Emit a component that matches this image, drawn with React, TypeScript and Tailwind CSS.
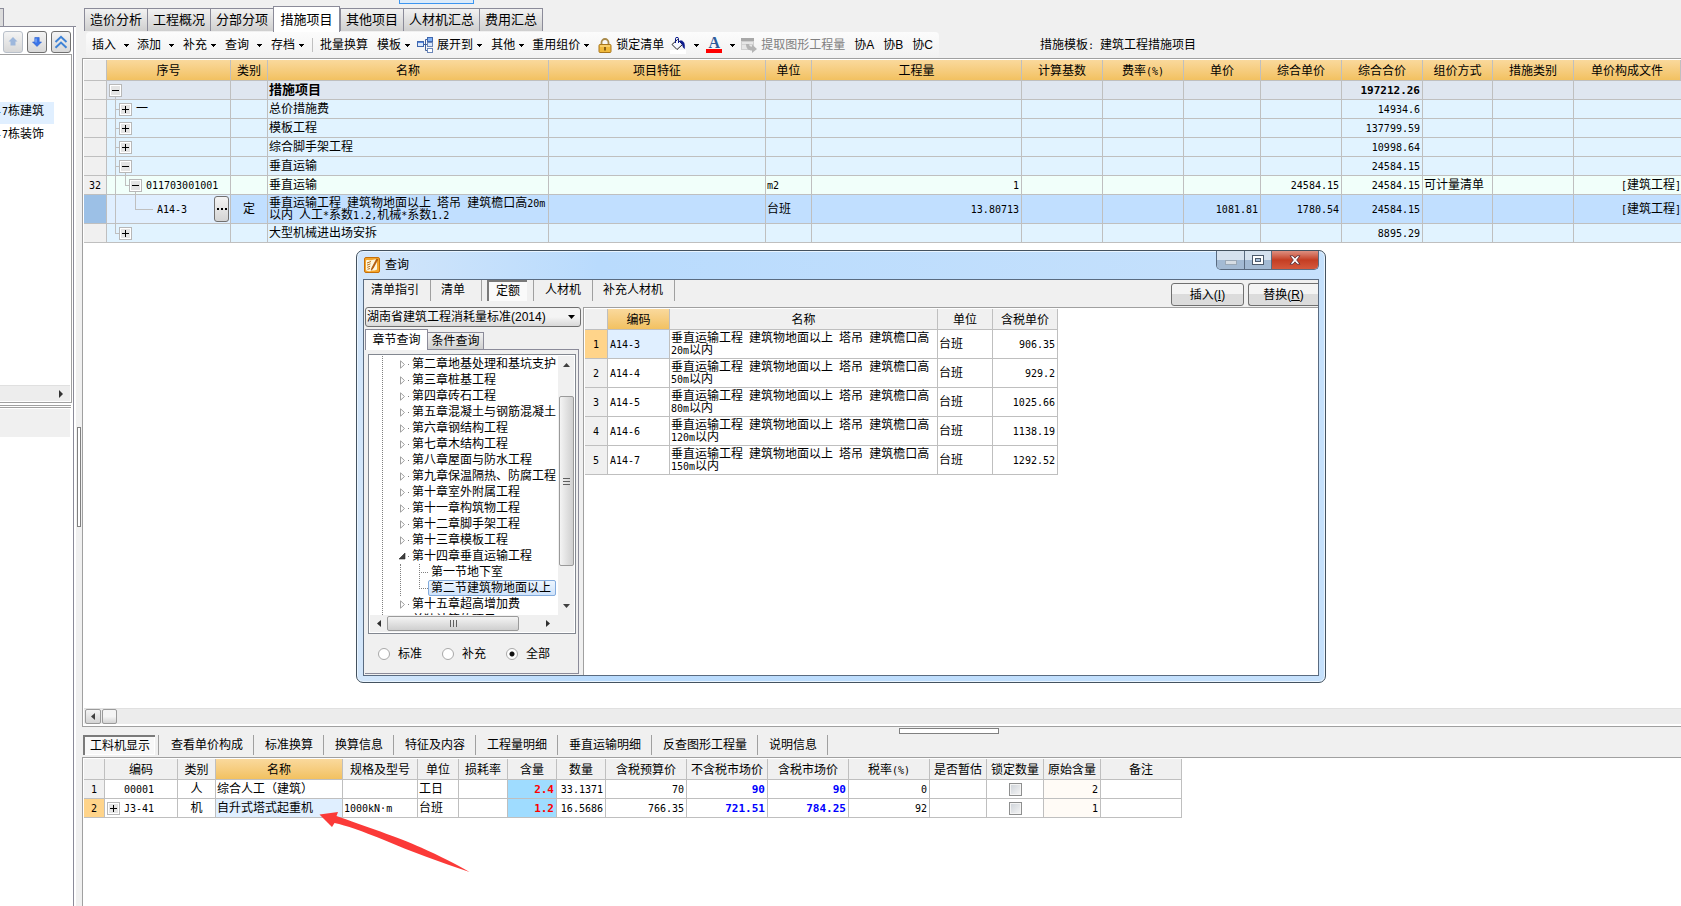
import { useState } from 'react';
import type { ReactNode } from 'react';
import { clsx } from 'clsx';

// Latin runs use a half-width monospace face next to the full-width Chinese text
function T({ children }: { children: string }) {
  const parts = children.split(/([\x20-\x7e·]+)/);
  return (
    <>
      {parts.map((part, i) =>
        i % 2 === 1 ? (
          <span key={i} className="whitespace-pre font-['DejaVu_Sans_Mono',monospace] text-[10px] leading-[0]">
            {part}
          </span>
        ) : (
          part
        )
      )}
    </>
  );
}

function Num({ children, className }: { children: string; className?: string }) {
  return (
    <span className={clsx("font-['DejaVu_Sans_Mono',monospace] leading-none", className ?? 'text-[10px]')}>
      {children}
    </span>
  );
}

function Expander({ open, label }: { open: boolean; label: string }) {
  return (
    <button type="button" aria-label={label} className="relative block h-[13px] w-[13px] shrink-0 border border-[#b8b8b8] bg-white p-px">
      <svg viewBox="0 0 9 9" className="block h-[9px] w-[9px] bg-[#e4e4e4]" shapeRendering="crispEdges">
        <path d={open ? 'M1 4h7v1h-7z' : 'M1 4h7v1h-7z M4 1h1v7h-1z'} fill="#000" />
      </svg>
    </button>
  );
}

/* ---------- left side ---------- */

function ArrowUpIcon() {
  return (
    <svg width="12" height="12" viewBox="0 0 12 12">
      <path d="M6 1 10.500 5.500H8.500v4h-5v-4H1.500z" fill="#9db7dc" />
    </svg>
  );
}

function ArrowDownIcon() {
  return (
    <svg width="12" height="12" viewBox="0 0 12 12">
      <path d="M6 10.500 1.500 6h2.300V1.500h4.400V6h2.300z" fill="#3a74e8" stroke="#2a5fd0" strokeWidth="0.6" />
      <path d="M5 2.500v4" stroke="#9cc0ff" />
    </svg>
  );
}

function DoubleUpIcon() {
  return (
    <svg width="14" height="14" viewBox="0 0 14 14" fill="none" stroke="#3f83d6" strokeWidth="2">
      <path d="M1.5 7 7 1.8 12.5 7" />
      <path d="M1.5 12.8 7 7.6l5.5 5.2" />
    </svg>
  );
}

function SidePanel() {
  const buttons = [
    { label: '上移', icon: <ArrowUpIcon />, cls: 'border-[#b9c0ca]' },
    { label: '下移', icon: <ArrowDownIcon />, cls: 'border-[#707070]' },
    { label: '收起', icon: <DoubleUpIcon />, cls: 'border-[#707070]' },
  ];
  return (
    <aside className="flex w-[76px] shrink-0 flex-col bg-[#f0f0f0]">
      <div className="flex h-[26px] items-end">
        <div className="h-[18px] w-1 border-t border-r border-[#8b8b99] bg-[#dcdcdc]" />
      </div>
      <div className="flex flex-1 flex-col border-t border-[#8b8b99] bg-white">
        <div className="flex w-[74px] flex-1 flex-col border-r border-[#8b8b99]">
          <div className="flex h-[27px] items-center gap-1 pt-[3px] pl-[3px]">
            {buttons.map((b) => (
              <button
                key={b.label}
                type="button"
                aria-label={b.label}
                className={clsx('flex h-[22px] w-5 items-center justify-center rounded-[3px] border bg-linear-to-b from-[#f4f4f4] to-[#d8d8d8]', b.cls)}
              >
                {b.icon}
              </button>
            ))}
          </div>
          <div className="flex h-[349px] w-[72px] flex-col border-t border-r border-b border-[#a0a0a0]">
            <ul className="flex-1 pt-[47px]">
              <li className="h-[22px] w-[54px] bg-[#e0efff] leading-[18px]">
                <span className="-ml-1">
                  <T>-7栋建筑</T>
                </span>
              </li>
              <li className="h-[22px] leading-[20px]">
                <span className="-ml-1">
                  <T>-7栋装饰</T>
                </span>
              </li>
            </ul>
            <div className="mb-px flex h-4 w-[70px] items-center justify-end border-t border-[#e0e0e0] bg-[#ededed] pr-[7px]">
              <svg width="4" height="8" viewBox="0 0 4 8">
                <path d="M0 0l4 4-4 4z" fill="#333" />
              </svg>
            </div>
          </div>
          <div className="mt-[2px] h-[3px] w-[71px] border-t border-b border-[#a0a0a0]" />
          <div className="mt-px h-[28px] w-[70px] bg-[#f0f0f0]" />
        </div>
      </div>
    </aside>
  );
}

/* ---------- top bar ---------- */

const mainTabs = ['造价分析', '工程概况', '分部分项', '措施项目', '其他项目', '人材机汇总', '费用汇总'];

function MainTabs() {
  const [active, setActive] = useState('措施项目');
  return (
    <nav className="flex h-8 items-end pl-px">
      {mainTabs.map((tab) => (
        <button
          key={tab}
          type="button"
          onClick={() => setActive(tab)}
          className={clsx(
            'border-t border-l border-[#8b8b99] text-[13px] leading-[22px] text-black last:border-r',
            tab === active ? 'h-[26px] w-[67px] border-r bg-white' : 'mb-px h-[23px] bg-linear-to-b from-[#f2f2f2] to-[#cfcfcf] px-[5px]'
          )}
        >
          {tab}
        </button>
      ))}
    </nav>
  );
}

function Caret() {
  return (
    <svg width="5" height="3" viewBox="0 0 5 3" className="shrink-0" shapeRendering="crispEdges">
      <path d="M0 0h5v1h-1v1h-1v1h-1v-1h-1v-1h-1z" fill="#000" />
    </svg>
  );
}

function ExpandIcon() {
  return (
    <svg width="16" height="16" viewBox="0 0 16 16">
      <path d="M6.500 7.500h2M8.500 2.500v11M8.500 2.500h2M8.500 7.500h2M8.500 13.500h2" stroke="#3f5f9a" fill="none" />
      <rect x="0.5" y="4.5" width="6" height="5" fill="#dbe9fb" stroke="#3f66ad" />
      <path d="M1 5.5h5" stroke="#5b8be0" />
      <rect x="10.5" y="0.5" width="5" height="4" fill="#7fb0f4" stroke="#3f66ad" />
      <rect x="10.5" y="5.5" width="5" height="4" fill="#dbe9fb" stroke="#6b86b8" />
      <rect x="10.5" y="11.5" width="5" height="4" fill="#fff" stroke="#6b86b8" />
    </svg>
  );
}

function LockIcon() {
  return (
    <svg width="14" height="15" viewBox="0 0 14 15">
      <path d="M3.5 7V4.5a3.5 3.5 0 0 1 7 0V7" fill="none" stroke="#a88a4a" strokeWidth="1.8" />
      <rect x="1" y="6.5" width="12" height="8" rx="1" fill="#f0b93c" stroke="#a9761c" />
      <path d="M2 8h10" stroke="#fde39a" />
      <path d="M6.3 9h1.4v3.5H6.3z" fill="#5c3b05" />
    </svg>
  );
}

function BucketIcon() {
  return (
    <svg width="16" height="17" viewBox="0 0 16 17">
      <rect x="0" y="13" width="16" height="4" fill="#fff" />
      <path d="M2 7.500 7.500 2.500l5 5L7 12.500z" fill="#f4f6ff" stroke="#222" />
      <path d="M5.500 6V1.800a1.500 1.500 0 0 1 3 0V6" fill="none" stroke="#0b1a8c" />
      <path d="M9.500 4c3.200-.8 5.500 1 5 7.500-1.800-.8-1.500-3-2.500-4.200z" fill="#0b1a8c" stroke="#0b1a8c" strokeWidth="0.6" />
    </svg>
  );
}

function ExtractIcon() {
  return (
    <svg width="16" height="16" viewBox="0 0 16 16">
      <rect x="0" y="1" width="13" height="3.500" fill="#a8a8a8" />
      <rect x="0.500" y="4.500" width="12" height="8" fill="#e6e6e6" stroke="#cfcfcf" />
      <path d="M1 7.500h11" stroke="#d2d2d2" />
      <path d="M5 7h3c.2 2 1 2.700 3 2.700V7.500l5 4.500-5 4v-2.500C7.500 13.500 5 11.500 5 7z" fill="#b4b4b4" />
    </svg>
  );
}

function ToolItem({ children, arrow, className }: { children: ReactNode; arrow?: 'near' | 'far'; className?: string }) {
  return (
    <button type="button" className={clsx('flex shrink-0 items-center whitespace-nowrap', className)}>
      {children}
      {arrow && (
        <span className={arrow === 'far' ? 'ml-2' : 'ml-1'}>
          <Caret />
        </span>
      )}
    </button>
  );
}

function Toolbar() {
  return (
    <div className="flex h-[26px] items-center">
      <div className="ml-[3px] flex h-full shrink-0 items-center rounded-sm bg-linear-to-b from-[#fcfcfc] to-[#f1f1f1] pr-[6px] pl-[6px]">
        <ToolItem arrow="far" className="mr-2">插入</ToolItem>
        <ToolItem arrow="far" className="mr-[9px]">添加</ToolItem>
        <ToolItem arrow="near" className="mr-[9px]">补充</ToolItem>
        <ToolItem arrow="far" className="mr-[9px]">查询</ToolItem>
        <ToolItem arrow="near" className="mr-2">存档</ToolItem>
        <span className="mr-[7px] h-[14px] w-px bg-[#c0c0c0]" />
        <ToolItem className="mr-[9px]">批量换算</ToolItem>
        <ToolItem arrow="near" className="mr-[7px]">模板</ToolItem>
        <ToolItem arrow="near" className="mr-[9px]">
          <span className="mr-1">
            <ExpandIcon />
          </span>
          展开到
        </ToolItem>
        <ToolItem arrow="near" className="mr-2">其他</ToolItem>
        <ToolItem arrow="near" className="mr-[9px]">重用组价</ToolItem>
        <ToolItem className="mr-[6px]">
          <span className="mr-1">
            <LockIcon />
          </span>
          锁定清单
        </ToolItem>
        <ToolItem arrow="far" className="mr-[7px]">
          <BucketIcon />
        </ToolItem>
        <ToolItem arrow="far" className="mr-[6px]">
          <span className="flex h-4 w-4 flex-col items-center justify-between border-b-4 border-[#f00] font-['Liberation_Serif',serif] text-[16px] leading-[12px] font-bold text-[#2f5c9c]">
            A
          </span>
        </ToolItem>
        <ToolItem className="mr-[9px] text-[#808080]">
          <span className="mr-1">
            <ExtractIcon />
          </span>
          提取图形工程量
        </ToolItem>
        <ToolItem className="mr-[9px]">协A</ToolItem>
        <ToolItem className="mr-[9px]">协B</ToolItem>
        <ToolItem>协C</ToolItem>
      </div>
      <p className="ml-[101px] whitespace-nowrap">
        措施模板<T>: </T>建筑工程措施项目
      </p>
    </div>
  );
}

/* ---------- main grid ---------- */

const gridCols = [
  { title: '', w: 'w-[23px]' },
  { title: '序号', w: 'w-[124px]' },
  { title: '类别', w: 'w-[37px]' },
  { title: '名称', w: 'w-[281px]' },
  { title: '项目特征', w: 'w-[217px]' },
  { title: '单位', w: 'w-[46px]' },
  { title: '工程量', w: 'w-[210px]' },
  { title: '计算基数', w: 'w-[81px]' },
  { title: '费率(%)', w: 'w-[81px]' },
  { title: '单价', w: 'w-[77px]' },
  { title: '综合单价', w: 'w-[81px]' },
  { title: '综合合价', w: 'w-[81px]' },
  { title: '组价方式', w: 'w-[70px]' },
  { title: '措施类别', w: 'w-[81px]' },
  { title: '单价构成文件', w: '' },
];

type GridRow = {
  no?: string;
  code?: string;
  pad: string;
  open?: boolean;
  lines: string;
  type?: string;
  name: string;
  unit?: string;
  qty?: string;
  price?: string;
  unitTotal?: string;
  total: string;
  mode?: string;
  file?: string;
  bg: string;
  bold?: boolean;
  selected?: boolean;
};

const gridRows: GridRow[] = [
  { pad: 'pl-[2px]', open: true, lines: 'M8.5 15v4', name: '措施项目', total: '197212.26', bg: 'bg-[#dfe6f0]', bold: true },
  { pad: 'pl-[12px]', open: false, lines: 'M8.5 0v19M8.5 9.5h4', code: '一', name: '总价措施费', total: '14934.6', bg: 'bg-[#e1f3ff]' },
  { pad: 'pl-[12px]', open: false, lines: 'M8.5 0v19M8.5 9.5h4', name: '模板工程', total: '137799.59', bg: 'bg-[#e1f3ff]' },
  { pad: 'pl-[12px]', open: false, lines: 'M8.5 0v19M8.5 9.5h4', name: '综合脚手架工程', total: '10998.64', bg: 'bg-[#e1f3ff]' },
  { pad: 'pl-[12px]', open: true, lines: 'M8.5 0v19M8.5 9.5h4M18.5 15v4', name: '垂直运输', total: '24584.15', bg: 'bg-[#e1f3ff]' },
  {
    no: '32', pad: 'pl-[22px]', open: true, lines: 'M8.5 0v19M18.5 0v9.500h4M28.5 15v4', code: '011703001001', name: '垂直运输',
    unit: 'm2', qty: '1', unitTotal: '24584.15', total: '24584.15', mode: '可计量清单', file: '[建筑工程]', bg: 'bg-[#f1fffa]',
  },
  {
    pad: 'pl-[46px]', lines: 'M8.5 0v29M28.5 0v14.500h17', code: 'A14-3', type: '定',
    name: '垂直运输工程 建筑物地面以上 塔吊 建筑檐口高20m\n以内 人工*系数1.2,机械*系数1.2',
    unit: '台班', qty: '13.80713', price: '1081.81', unitTotal: '1780.54', total: '24584.15', file: '[建筑工程]', bg: 'bg-[#c1dfff]', selected: true,
  },
  { pad: 'pl-[12px]', open: false, lines: 'M8.5 0v9.500h4', name: '大型机械进出场安拆', total: '8895.29', bg: 'bg-[#e1f3ff]' },
];

const cell = 'border-r border-b border-[#bfbfbf] p-0 leading-[14px]';
const headCell = 'border-r border-b border-[#bfbfbf] p-0 pt-px leading-[14px] font-normal whitespace-nowrap';

function MeasureGrid() {
  return (
    <table className="w-full table-fixed border-separate border-spacing-0">
      <colgroup>
        {gridCols.map((c, i) => (
          <col key={i} className={c.w} />
        ))}
      </colgroup>
      <thead>
        <tr className="h-[21px]">
          {gridCols.map((c, i) => (
            <th key={i} className={clsx(headCell, i === 0 ? 'bg-[#f0f0f0]' : 'bg-linear-to-b from-[#fad99c] to-[#f2c160]')}>
              <T>{c.title}</T>
            </th>
          ))}
        </tr>
      </thead>
      <tbody>
        {gridRows.map((r, i) => {
          const h = r.selected ? 29 : 19;
          return (
            <tr key={i} className={clsx(r.bg, r.selected ? 'h-[29px]' : 'h-[19px]', r.bold && 'font-bold')}>
              <td className={clsx(cell, 'text-center', r.selected ? 'bg-[#9cc0e6]' : 'bg-[#f0f0f0]')}>
                <Num>{r.no ?? ''}</Num>
              </td>
              <td className={clsx(cell, 'relative', r.selected && 'bg-[#e0efff]')}>
                <svg width="48" height={h} viewBox={`0 0 48 ${h}`} className="absolute top-0 left-0" fill="none" stroke="#bfbfbf" shapeRendering="crispEdges">
                  <path d={r.lines} />
                </svg>
                <div className={clsx('flex items-center', r.pad)}>
                  {r.open !== undefined && <Expander open={r.open} label={r.name} />}
                  {r.code && (
                    <span className="ml-1 leading-[14px]">
                      <T>{r.code}</T>
                    </span>
                  )}
                  {r.selected && (
                    <button type="button" aria-label="选择" className="mr-px ml-auto flex h-[26px] w-[15px] items-center justify-center rounded-[3px] border border-[#707070] bg-linear-to-b from-[#f4f4f4] to-[#d4d4d4]">
                      <svg width="10" height="2" viewBox="0 0 10 2" shapeRendering="crispEdges">
                        <path d="M0 0h2v2h-2zM4 0h2v2h-2zM8 0h2v2h-2z" fill="#000" />
                      </svg>
                    </button>
                  )}
                </div>
              </td>
              <td className={clsx(cell, 'text-center')}>{r.type}</td>
              <td className={clsx(cell, 'overflow-hidden pl-px whitespace-pre', r.selected && 'leading-[12px]!', r.bold && 'text-[13px]')}>
                <T>{r.name}</T>
              </td>
              <td className={cell} />
              <td className={clsx(cell, 'pl-px')}>
                <T>{r.unit ?? ''}</T>
              </td>
              <td className={clsx(cell, 'pr-[2px] text-right')}>
                <Num>{r.qty ?? ''}</Num>
              </td>
              <td className={cell} />
              <td className={cell} />
              <td className={clsx(cell, 'pr-[2px] text-right')}>
                <Num>{r.price ?? ''}</Num>
              </td>
              <td className={clsx(cell, 'pr-[2px] text-right')}>
                <Num>{r.unitTotal ?? ''}</Num>
              </td>
              <td className={clsx(cell, 'pr-[2px] text-right')}>
                <Num className={r.bold ? 'text-[11px]' : undefined}>{r.total}</Num>
              </td>
              <td className={clsx(cell, 'pl-px')}>{r.mode}</td>
              <td className={cell} />
              <td className={clsx(cell, 'border-r-0 text-right')}>
                <T>{r.file ?? ''}</T>
              </td>
            </tr>
          );
        })}
      </tbody>
    </table>
  );
}

/* ---------- bottom grid ---------- */

const detailTabs = ['查看单价构成', '标准换算', '换算信息', '特征及内容', '工程量明细', '垂直运输明细', '反查图形工程量', '说明信息'];

const detailCols = [
  { title: '', w: 'w-[21px]' },
  { title: '编码', w: 'w-[73px]' },
  { title: '类别', w: 'w-[38px]' },
  { title: '名称', w: 'w-[127px]' },
  { title: '规格及型号', w: 'w-[75px]' },
  { title: '单位', w: 'w-[41px]' },
  { title: '损耗率', w: 'w-[49px]' },
  { title: '含量', w: 'w-[49px]' },
  { title: '数量', w: 'w-[49px]' },
  { title: '含税预算价', w: 'w-[81px]' },
  { title: '不含税市场价', w: 'w-[81px]' },
  { title: '含税市场价', w: 'w-[81px]' },
  { title: '税率(%)', w: 'w-[81px]' },
  { title: '是否暂估', w: 'w-[57px]' },
  { title: '锁定数量', w: 'w-[57px]' },
  { title: '原始含量', w: 'w-[57px]' },
  { title: '备注', w: 'w-[81px]' },
];

const detailRows = [
  { code: '00001', type: '人', name: '综合人工（建筑）', spec: '', unit: '工日', rate: '2.4', qty: '33.1371', budget: '70', net: '90', gross: '90', tax: '0', origin: '2' },
  { code: 'J3-41', type: '机', name: '自升式塔式起重机', spec: '1000kN·m', unit: '台班', rate: '1.2', qty: '16.5686', budget: '766.35', net: '721.51', gross: '784.25', tax: '92', origin: '1' },
];

function DetailTabs() {
  return (
    <nav className="flex h-[22px] items-start">
      <button type="button" className="h-5 w-[72px] shrink-0 border-t-2 border-l-2 border-[#7a7a7a] bg-[#f8f8f8] leading-[19px] whitespace-nowrap shadow-[inset_-1px_-1px_0_#fff]">
        工料机显示
      </button>
      <span className="mr-px h-5 w-1 border-r border-[#a0a0a0]" />
      {detailTabs.map((tab) => (
        <button key={tab} type="button" className="h-5 shrink-0 border-r border-[#a0a0a0] pr-[10px] pl-[11px] leading-[21px] whitespace-nowrap">
          {tab}
        </button>
      ))}
    </nav>
  );
}

function DetailGrid() {
  return (
    <table className="w-[1098px] table-fixed border-separate border-spacing-0">
      <colgroup>
        {detailCols.map((c, i) => (
          <col key={i} className={c.w} />
        ))}
      </colgroup>
      <thead>
        <tr className="h-[21px]">
          {detailCols.map((c, i) => (
            <th key={i} className={clsx(headCell, c.title === '名称' ? 'bg-linear-to-b from-[#fad99c] to-[#f2c160]' : 'bg-[#f0f0f0]')}>
              <T>{c.title}</T>
            </th>
          ))}
        </tr>
      </thead>
      <tbody>
        {detailRows.map((r, i) => (
          <tr key={r.code} className="h-[19px]">
            <td className={clsx(cell, 'text-center', i === 1 ? 'bg-[#ffd48a]' : 'bg-[#f0f0f0]')}>
              <Num>{String(i + 1)}</Num>
            </td>
            <td className={cell}>
              <div className="flex items-center pl-[2px]">
                {i === 1 ? <Expander open={false} label={r.name} /> : <span className="w-[13px]" />}
                <span className="ml-1 leading-[14px]">
                  <T>{r.code}</T>
                </span>
              </div>
            </td>
            <td className={clsx(cell, 'text-center')}>{r.type}</td>
            <td className={clsx(cell, 'pl-px', i === 1 && 'bg-[#e0efff]')}>{r.name}</td>
            <td className={clsx(cell, 'pl-px whitespace-nowrap')}>
              <T>{r.spec}</T>
            </td>
            <td className={clsx(cell, 'pl-px')}>{r.unit}</td>
            <td className={cell} />
            <td className={clsx(cell, 'bg-[#9fdcff] pr-[2px] text-right font-bold text-[#f00]')}>
              <Num className="text-[11px]">{r.rate}</Num>
            </td>
            <td className={clsx(cell, 'pr-[2px] text-right')}>
              <Num>{r.qty}</Num>
            </td>
            <td className={clsx(cell, 'pr-[2px] text-right')}>
              <Num>{r.budget}</Num>
            </td>
            <td className={clsx(cell, 'pr-[2px] text-right font-bold text-[#00f]')}>
              <Num className="text-[11px]">{r.net}</Num>
            </td>
            <td className={clsx(cell, 'pr-[2px] text-right font-bold text-[#00f]')}>
              <Num className="text-[11px]">{r.gross}</Num>
            </td>
            <td className={clsx(cell, 'pr-[2px] text-right')}>
              <Num>{r.tax}</Num>
            </td>
            <td className={cell} />
            <td className={cell}>
              <input
                type="checkbox"
                aria-label="锁定数量"
                className="mx-auto block h-[13px] w-[13px] appearance-none border border-[#8e8f8f] bg-linear-to-br from-[#cdd2d8] to-[#f6f6f6] shadow-[inset_0_0_0_1px_#f4f4f4] checked:bg-[#3a74e8]"
              />
            </td>
            <td className={clsx(cell, 'bg-[#fffbf6] pr-[2px] text-right')}>
              <Num>{r.origin}</Num>
            </td>
            <td className={cell} />
          </tr>
        ))}
      </tbody>
    </table>
  );
}

/* ---------- query dialog ---------- */

const chapters = [
  '第二章地基处理和基坑支护',
  '第三章桩基工程',
  '第四章砖石工程',
  '第五章混凝土与钢筋混凝土',
  '第六章钢结构工程',
  '第七章木结构工程',
  '第八章屋面与防水工程',
  '第九章保温隔热、防腐工程',
  '第十章室外附属工程',
  '第十一章构筑物工程',
  '第十二章脚手架工程',
  '第十三章模板工程',
  '第十四章垂直运输工程',
  '第十五章超高增加费',
  '单独计算的项目',
];

const quotas = [
  { code: 'A14-3', height: '20m', price: '906.35' },
  { code: 'A14-4', height: '50m', price: '929.2' },
  { code: 'A14-5', height: '80m', price: '1025.66' },
  { code: 'A14-6', height: '120m', price: '1138.19' },
  { code: 'A14-7', height: '150m', price: '1292.52' },
];

function NoteIcon() {
  return (
    <svg width="16" height="16" viewBox="0 0 16 16">
      <rect x="0.5" y="0.5" width="15" height="15" rx="1.5" fill="#f3a52c" stroke="#c66f08" />
      <path d="M2 3.500c2-1.500 4 .5 6-.5L13 2v10.500c-2 1.500-4 .5-6 1.500-2 .6-3.500.3-5-.8z" fill="#fff6dc" />
      <path d="M3 6l4-1.500M3 8.200l3.500-1.400M3.200 10.400l3-1.200M3.500 12.300l2.500-.8" stroke="#b8701a" />
      <path d="M13.800 2.500 9 11.500l-1.800 1.800L7.800 11l4.800-9z" fill="#d46a00" stroke="#8a3d00" strokeWidth="0.600" />
    </svg>
  );
}

function ChapterTree() {
  return (
    <ul className="relative h-[259px] w-[188px] overflow-hidden pl-[29px] whitespace-nowrap">
      <span className="absolute top-0 left-[12px] h-full border-l border-dotted border-[#808080]" />
      {chapters.map((title) => {
        const open = title === '第十四章垂直运输工程';
        const last = title === '单独计算的项目';
        return (
          <li key={title}>
            <div className="flex h-4 items-center leading-4">
              <svg width="10" height="9" viewBox="0 0 10 9" className="mr-[3px] shrink-0">
                {open ? (
                  <path d="M6 1v6H0z" fill="#404040" stroke="#262626" strokeWidth="0.6" />
                ) : (
                  !last && <path d="M1.500 0.800 5.500 4.500 1.500 8.200z" fill="#fff" stroke="#a0a0a0" />
                )}
                <path d="M9 4h1v1H9z" fill="#808080" />
              </svg>
              {title}
            </div>
            {open && (
              <ul className="ml-[1px] border-l border-dotted border-[#808080] pl-[18px]">
                <li className="flex h-4 items-center leading-4">
                  <svg width="9" height="16" viewBox="0 0 9 16" fill="none" stroke="#808080" strokeDasharray="1 1" className="mr-[3px] shrink-0" shapeRendering="crispEdges">
                    <path d="M0.500 0v16M0 8.500h9" />
                  </svg>
                  第一节地下室
                </li>
                <li className="flex h-4 items-center leading-[14px]">
                  <svg width="9" height="16" viewBox="0 0 9 16" fill="none" stroke="#808080" strokeDasharray="1 1" className="shrink-0" shapeRendering="crispEdges">
                    <path d="M0.500 0v8M0 8.500h9" />
                  </svg>
                  <a href="#section-2" className="h-4 rounded-[2px] border border-[#84acdd] bg-linear-to-b from-[#eef6fe] to-[#cfe3fb] pr-1 pl-[2px]">
                    第二节建筑物地面以上
                  </a>
                </li>
              </ul>
            )}
          </li>
        );
      })}
    </ul>
  );
}

function QueryDialog() {
  const [scope, setScope] = useState('全部');
  return (
    <section
      role="dialog"
      aria-label="查询"
      className="absolute top-[250px] left-[356px] flex h-[433px] w-[970px] flex-col rounded-[7px] border border-[#44525f] bg-linear-to-r from-[#d3e6fa] via-[#b9dbfd] via-25% to-[#c6e1fc] p-[6px] pt-0 shadow-[inset_0_0_0_1px_#e8f4ff]"
    >
      <header className="flex h-[28px] items-start">
        <div className="flex items-center gap-[5px] pt-[6px] pl-px">
          <NoteIcon />
          <h2 className="leading-4">查询</h2>
        </div>
        <div className="ml-auto flex h-[19px] overflow-hidden rounded-b-[5px] border border-t-0 border-[#5a6b80]">
          <button type="button" aria-label="最小化" className="flex w-[28px] items-center justify-center border-r border-[#5a6b80] bg-linear-to-b from-[#d5e1ee] from-50% to-[#a3bad3] to-50% pt-1">
            <svg width="12" height="5" viewBox="0 0 12 5">
              <rect x="0.5" y="0.5" width="11" height="4" fill="#d6dde4" stroke="#9aa8b6" />
            </svg>
          </button>
          <button type="button" aria-label="最大化" className="flex w-[27px] items-center justify-center border-r border-[#5a6b80] bg-linear-to-b from-[#d5e1ee] from-50% to-[#a3bad3] to-50%">
            <svg width="12" height="10" viewBox="0 0 12 10">
              <rect x="0.5" y="0.5" width="11" height="9" fill="#fff" stroke="#4c5a6b" />
              <rect x="3.5" y="3.5" width="5" height="3" fill="#a9c0da" stroke="#4c5a6b" />
            </svg>
          </button>
          <button type="button" aria-label="关闭" className="flex w-[46px] items-center justify-center bg-linear-to-b from-[#dd8f80] via-[#c43d22] via-50% to-[#d4583c]">
            <svg width="12" height="10" viewBox="0 0 12 10">
              <path d="M1 .8h3L6 3.200 8 .8h3L7.700 5 11 9.200H8L6 6.800 4 9.200H1L4.300 5z" fill="#fff" stroke="#5c3038" strokeWidth="0.9" />
            </svg>
          </button>
        </div>
      </header>

      <div className="flex flex-1 flex-col border border-[#5a6b80] bg-[#f0f0f0]">
        <div className="flex h-[27px] items-start">
          <nav className="flex h-[21px] items-stretch leading-[21px]">
            <button type="button" className="border-r border-[#a0a0a0] pr-[11px] pl-[7px]">清单指引</button>
            <button type="button" className="border-r border-[#a0a0a0] pr-4 pl-[10px]">清单</button>
            <button type="button" className="mr-[6px] ml-[5px] w-[40px] border-t-2 border-l-2 border-[#7a7a7a] bg-[#fafafa] leading-[19px]">定额</button>
            <button type="button" className="border-r border-l border-[#a0a0a0] px-[11px]">人材机</button>
            <button type="button" className="border-r border-[#a0a0a0] pr-[11px] pl-[10px]">补充人材机</button>
          </nav>
          <div className="mt-[3px] ml-auto flex gap-1">
            <button type="button" className="h-[23px] w-[73px] rounded-[3px] border border-[#707070] bg-linear-to-b from-[#f4f4f4] from-50% to-[#dcdcdc] to-50%">
              插入(<u>I</u>)
            </button>
            <button type="button" className="h-[23px] w-[70px] rounded-l-[3px] border border-r-0 border-[#707070] bg-linear-to-b from-[#f4f4f4] from-50% to-[#dcdcdc] to-50%">
              替换(<u>R</u>)
            </button>
          </div>
        </div>

        <div className="flex flex-1">
          <div className="flex w-[219px] shrink-0 flex-col pl-px">
            <div className="relative mb-[2px]">
              <select aria-label="定额标准" className="block h-5 w-[216px] appearance-none rounded-[3px] border border-[#707070] bg-linear-to-b from-[#f4f4f4] from-50% to-[#d8d8d8] pl-px">
                <option>湖南省建筑工程消耗量标准(2014)</option>
              </select>
              <svg width="7" height="4" viewBox="0 0 7 4" className="pointer-events-none absolute top-2 left-[203px]">
                <path d="M0 0h7L3.500 4z" fill="#000" />
              </svg>
            </div>
            <div className="flex h-[20px] items-end">
              <button type="button" className="z-10 -mb-px h-[21px] w-[63px] border border-b-0 border-[#8b8b99] bg-white leading-[18px]">章节查询</button>
              <button type="button" className="h-[17px] w-[56px] border border-b-0 border-l-0 border-[#8b8b99] bg-linear-to-b from-[#f2f2f2] to-[#cfcfcf] leading-4">
                条件查询
              </button>
            </div>
            <div className="mb-px flex w-[214px] flex-1 flex-col border-t border-r border-b border-[#8b8b99] pt-1 pl-[3px]">
              <div className="w-[208px] border border-[#828790] bg-white p-px">
                <div className="flex">
                  <ChapterTree />
                  <div className="flex w-4 flex-col items-center bg-[#f0f0f0]">
                    <span className="flex h-[40px] pt-[7px]">
                      <svg width="7" height="4" viewBox="0 0 7 4">
                        <path d="M0 4h7L3.500 0z" fill="#404040" />
                      </svg>
                    </span>
                    <span className="flex h-[170px] w-[15px] flex-col items-center justify-center gap-[2px] rounded-[2px] border border-[#9a9a9a] bg-linear-to-r from-[#f4f4f4] to-[#cfcfcf]">
                      <span className="h-px w-[7px] bg-[#606060]" />
                      <span className="h-px w-[7px] bg-[#606060]" />
                      <span className="h-px w-[7px] bg-[#606060]" />
                    </span>
                    <span className="mt-auto flex h-[11px]">
                      <svg width="7" height="4" viewBox="0 0 7 4">
                        <path d="M0 0h7L3.500 4z" fill="#404040" />
                      </svg>
                    </span>
                  </div>
                </div>
                <div className="flex h-[17px] items-center bg-[#f0f0f0] pl-[7px]">
                  <svg width="4" height="7" viewBox="0 0 4 7" className="mr-[6px]">
                    <path d="M4 0v7L0 3.500z" fill="#303030" />
                  </svg>
                  <span className="flex h-[15px] w-[132px] items-center justify-center gap-[2px] rounded-[2px] border border-[#9a9a9a] bg-linear-to-b from-[#f4f4f4] to-[#cfcfcf]">
                    <span className="h-[7px] w-px bg-[#606060]" />
                    <span className="h-[7px] w-px bg-[#606060]" />
                    <span className="h-[7px] w-px bg-[#606060]" />
                  </span>
                  <svg width="4" height="7" viewBox="0 0 4 7" className="ml-[27px]">
                    <path d="M0 0v7l4-3.500z" fill="#303030" />
                  </svg>
                </div>
              </div>
              <div className="flex flex-1 items-center gap-5 pl-[10px]">
                {['标准', '补充', '全部'].map((v) => (
                  <label key={v} className="flex items-center gap-2">
                    <input
                      type="radio"
                      name="scope"
                      checked={scope === v}
                      onChange={() => setScope(v)}
                      className="h-[12px] w-[12px] appearance-none rounded-full border border-[#a8a8a8] bg-white checked:bg-[radial-gradient(circle,#111_0,#111_2px,#fff_3px)]"
                    />
                    <span className="leading-4">{v}</span>
                  </label>
                ))}
              </div>
            </div>
          </div>

          <div className="flex-1 border-t border-l border-[#a0a0a0] bg-white pt-px pl-px">
            <table className="w-[473px] table-fixed border-separate border-spacing-0">
              <colgroup>
                <col className="w-[23px]" />
                <col className="w-[62px]" />
                <col className="w-[268px]" />
                <col className="w-[55px]" />
                <col className="w-[65px]" />
              </colgroup>
              <thead>
                <tr className="h-[21px]">
                  {['', '编码', '名称', '单位', '含税单价'].map((t) => (
                    <th key={t} className={clsx(headCell, t === '编码' ? 'bg-linear-to-b from-[#fad99c] to-[#f2c160]' : 'bg-[#f0f0f0]')}>
                      {t}
                    </th>
                  ))}
                </tr>
              </thead>
              <tbody>
                {quotas.map((q, i) => (
                  <tr key={q.code} className="h-[29px]">
                    <td className={clsx(cell, 'text-center', i === 0 ? 'bg-[#ffd48a]' : 'bg-[#f0f0f0]')}>
                      <Num>{String(i + 1)}</Num>
                    </td>
                    <td className={clsx(cell, 'pl-[2px]', i === 0 && 'bg-[#e0efff]')}>
                      <Num>{q.code}</Num>
                    </td>
                    <td className={clsx(cell, 'pl-px leading-[12px]! whitespace-pre')}>
                      <T>{`垂直运输工程 建筑物地面以上 塔吊 建筑檐口高`}</T>
                      {'\n'}
                      <T>{`${q.height}以内`}</T>
                    </td>
                    <td className={clsx(cell, 'pl-px')}>台班</td>
                    <td className={clsx(cell, 'pr-[2px] text-right')}>
                      <Num>{q.price}</Num>
                    </td>
                  </tr>
                ))}
              </tbody>
            </table>
          </div>
        </div>
      </div>
    </section>
  );
}

export default function App() {
  return (
    <div className="relative flex min-h-screen overflow-hidden bg-[#f0f0f0] font-['Liberation_Sans','Noto_Sans_CJK_SC',sans-serif] text-[12px] leading-[14px] text-black">
      <SidePanel />

      {/* splitter between the two panes */}
      <div className="flex w-[6px] shrink-0 flex-col pt-[427px]">
        <div className="ml-px h-[100px] w-1 border border-[#808080] bg-white" />
      </div>

      <main className="flex min-w-0 flex-1 flex-col">
        <div className="pl-px">
          <MainTabs />
          <Toolbar />
        </div>

        <div className="flex flex-1 flex-col border-t border-b border-l border-[#a0a0a0] bg-white pt-px pl-px">
          <div className="flex-1">
            <MeasureGrid />
          </div>
          <div className="mb-[2px] flex h-4 gap-px border-t border-[#e0e0e0] bg-[#ececec] pl-px">
            <button type="button" aria-label="向左滚动" className="flex h-[15px] w-4 items-center justify-center rounded-[2px] border border-[#9a9a9a] bg-linear-to-b from-[#f4f4f4] to-[#d4d4d4]">
              <svg width="4" height="7" viewBox="0 0 4 7">
                <path d="M4 0v7L0 3.500z" fill="#404040" />
              </svg>
            </button>
            <span className="h-[15px] w-[15px] rounded-[2px] border border-[#9a9a9a] bg-linear-to-b from-[#f4f4f4] from-50% to-[#d4d4d4]" />
          </div>
        </div>

        <div className="flex h-2 items-center justify-center pr-[5px] pl-[139px]">
          <div className="h-[6px] w-[100px] border border-[#808080] bg-white" />
        </div>

        <div className="pl-px">
          <DetailTabs />
        </div>
        <div className="h-[149px] border-t border-l border-[#a0a0a0] bg-white pt-px pl-px">
          <DetailGrid />
        </div>
      </main>

      {/* bottom edge of the ribbon button that is scrolled out above */}
      <div className="absolute top-0 left-[399px] h-1 w-[75px] border border-t-0 border-[#3c95f0] bg-[#dcebfa]" />

      <QueryDialog />

      <svg className="pointer-events-none absolute top-[808px] left-[316px]" width="160" height="70" viewBox="316 808 160 70">
        <path d="M319.500 814.500 338 812 336.500 816C362 825 400 838 421 847.500C440 856 456 864 469.500 872C440 862 412 852 384 840C362 831 346 825.500 334.500 823L332 827z" fill="#fb3a38" />
      </svg>
    </div>
  );
}
